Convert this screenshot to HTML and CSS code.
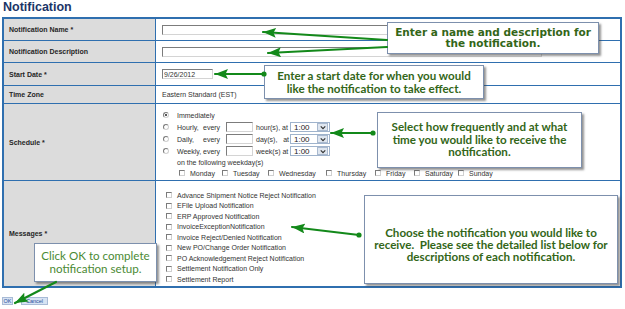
FILE: index.html
```html
<!DOCTYPE html>
<html>
<head>
<meta charset="utf-8">
<title>Notification</title>
<link rel="stylesheet" href="styles.css">
</head>
<body>
<div class="page">
  <h1 class="title">Notification</h1>
  <div class="form">
    <div class="lbl">Notification Name *</div>
    <div class="val"><input class="field wide" type="text"></div>

    <div class="lbl">Notification Description</div>
    <div class="val"><input class="field wide" type="text"></div>

    <div class="lbl">Start Date *</div>
    <div class="val"><input class="field date" type="text" value="9/26/2012"></div>

    <div class="lbl">Time Zone</div>
    <div class="val">Eastern Standard (EST)</div>

    <div class="lbl">Schedule *</div>
    <div class="val sched">
      <div class="srow"><span class="radio on"></span><span>Immediately</span></div>
      <div class="srow"><span class="radio"></span><span class="freq">Hourly,</span><span class="every">every</span><span class="field num"></span><span class="unit">hour(s), at</span><span class="select"><span class="sel-val">1:00</span><span class="sel-btn"><svg viewBox="0 0 8 6" width="6" height="5"><polyline points="1,1.5 4,4.5 7,1.5" fill="none" stroke="#333" stroke-width="1.6"/></svg></span></span></div>
      <div class="srow"><span class="radio"></span><span class="freq">Daily,</span><span class="every">every</span><span class="field num"></span><span class="unit">day(s),&nbsp;&nbsp;&nbsp;at</span><span class="select"><span class="sel-val">1:00</span><span class="sel-btn"><svg viewBox="0 0 8 6" width="6" height="5"><polyline points="1,1.5 4,4.5 7,1.5" fill="none" stroke="#333" stroke-width="1.6"/></svg></span></span></div>
      <div class="srow"><span class="radio"></span><span class="freq">Weekly,</span><span class="every">every</span><span class="field num"></span><span class="unit">week(s) at</span><span class="select"><span class="sel-val">1:00</span><span class="sel-btn"><svg viewBox="0 0 8 6" width="6" height="5"><polyline points="1,1.5 4,4.5 7,1.5" fill="none" stroke="#333" stroke-width="1.6"/></svg></span></span></div>
      <div class="srow follow">on the following weekday(s)</div>
      <div class="days">
        <span class="day"><span class="check"></span>Monday</span>
        <span class="day"><span class="check"></span>Tuesday</span>
        <span class="day"><span class="check"></span>Wednesday</span>
        <span class="day"><span class="check"></span>Thursday</span>
        <span class="day"><span class="check"></span>Friday</span>
        <span class="day"><span class="check"></span>Saturday</span>
        <span class="day"><span class="check"></span>Sunday</span>
      </div>
    </div>

    <div class="lbl last">Messages *</div>
    <div class="val msgs last">
      <div class="msg"><span class="check"></span>Advance Shipment Notice Reject Notification</div>
      <div class="msg"><span class="check"></span>EFile Upload Notification</div>
      <div class="msg"><span class="check"></span>ERP Approved Notification</div>
      <div class="msg"><span class="check"></span>InvoiceExceptionNotification</div>
      <div class="msg"><span class="check"></span>Invoice Reject/Denied Notification</div>
      <div class="msg"><span class="check"></span>New PO/Change Order Notification</div>
      <div class="msg"><span class="check"></span>PO Acknowledgement Reject Notification</div>
      <div class="msg"><span class="check"></span>Settlement Notification Only</div>
      <div class="msg"><span class="check"></span>Settlement Report</div>
    </div>
  </div>
  <div class="buttons">
    <button class="btn ok" type="button">OK</button>
    <button class="btn cancel" type="button">Cancel</button>
  </div>

  <div class="callout c1">Enter a name and description for<br>the notification.</div>
  <div class="callout c2">Enter a start date for when you would<br>like the notification to take effect.</div>
  <div class="callout c3">Select how frequently and at what<br>time you would like to receive the<br>notification.</div>
  <div class="callout c4">Choose the notification you would like to<br>receive.&nbsp; Please see the detailed list below for<br>descriptions of each notification.</div>
  <div class="callout c5">Click OK to complete<br>notification setup.</div>

  <svg class="arrows" width="625" height="309" viewBox="0 0 625 309">
    <defs>
      <marker id="head" markerUnits="userSpaceOnUse" markerWidth="14" markerHeight="10" refX="13" refY="5" orient="auto">
        <path d="M0,0 L13,5 L0,10 L2.5,5 Z" fill="#13891a"/>
      </marker>
    </defs>
    <g stroke="#13891a" stroke-width="2.2" fill="none" stroke-linecap="round">
      <line x1="387" y1="40" x2="263" y2="32" marker-end="url(#head)"/>
      <line x1="387" y1="47" x2="268" y2="53" marker-end="url(#head)"/>
      <line x1="264" y1="74" x2="215" y2="74" marker-end="url(#head)"/>
      <line x1="373" y1="133" x2="331" y2="133" marker-end="url(#head)"/>
      <line x1="359" y1="235" x2="292" y2="227" marker-end="url(#head)"/>
      <line x1="56" y1="282" x2="15" y2="303" marker-end="url(#head)"/>
    </g>
    <g fill="#13891a">
      <circle cx="264" cy="74" r="2.6"/>
      <circle cx="373" cy="133" r="2.6"/>
      <circle cx="359" cy="235" r="2.6"/>
    </g>
  </svg>
</div>
</body>
</html>
```

FILE: styles.css
```css
* { box-sizing: border-box; }

body {
  margin: 0;
  background: #ffffff;
  font-family: "Liberation Sans", Arial, sans-serif;
}

.page {
  position: relative;
  width: 625px;
  height: 309px;
  overflow: hidden;
}

.title {
  margin: 0;
  height: 17px;
  padding-left: 3px;
  font: bold 12.5px/15px "Liberation Sans", Arial, sans-serif;
  color: #1b3567;
}

.form {
  margin-left: 2px;
  width: 620px;
  border: 2px solid #2f6faf;
  display: grid;
  grid-template-columns: 152px 1fr;
  grid-template-rows: 22px 22px 23px 18px 77px 105px;
}

.lbl {
  background: #dcdcdc;
  border-right: 1px solid #2f6faf;
  border-bottom: 1px solid #2f6faf;
  display: flex;
  align-items: center;
  padding-left: 5px;
  font-weight: bold;
  font-size: 7px;
  color: #262626;
}

.val {
  border-bottom: 1px solid #2f6faf;
  display: flex;
  align-items: center;
  padding-left: 6px;
  font-size: 7px;
  color: #333333;
}

.last { border-bottom: none; }

.field {
  display: inline-block;
  height: 10px;
  margin: 0;
  padding: 0 1px;
  background: #ffffff;
  border: 1px solid;
  border-color: #7c7c7c #d4d4d4 #d4d4d4 #7c7c7c;
  font: 7px/8px "Liberation Sans", Arial, sans-serif;
  color: #333333;
  outline: none;
}

.wide { width: 380px; }
.date { width: 51px; }
.num { width: 27px; }

/* schedule */
.sched {
  display: block;
  padding: 5px 0 0 7px;
}

.srow {
  display: flex;
  align-items: center;
  height: 12px;
}

.radio {
  width: 6px;
  height: 6px;
  margin-right: 8px;
  border-radius: 50%;
  border: 1px solid;
  border-color: #7b7b7b #d0d0d0 #d0d0d0 #7b7b7b;
  background: #ffffff;
  position: relative;
}

.radio.on::after {
  content: "";
  position: absolute;
  left: 1px;
  top: 1px;
  width: 2px;
  height: 2px;
  border-radius: 50%;
  background: #222222;
}

.freq { width: 26px; }
.every { width: 23px; }
.unit { width: 34px; margin-left: 3px; white-space: nowrap; }

.select {
  display: flex;
  align-items: center;
  justify-content: space-between;
  width: 40px;
  height: 10px;
  border: 1px solid #9fb3cc;
  background: #ffffff;
  padding: 0 1px 0 3px;
}

.sel-val {
  font-size: 8px;
  color: #222222;
}

.sel-btn {
  display: flex;
  align-items: center;
  justify-content: center;
  width: 11px;
  height: 8px;
  background: #dfe6ef;
  border: 1px solid #a9b9cf;
}

.follow {
  height: 11px;
  padding-left: 14px;
}

.days {
  display: grid;
  grid-template-columns: 43px 46px 58px 49px 39px 44px auto;
  align-items: center;
  height: 10px;
  padding-left: 16px;
}

.day {
  display: flex;
  align-items: center;
  white-space: nowrap;
}

.check {
  display: inline-block;
  width: 6px;
  height: 6px;
  margin-right: 5px;
  border: 1px solid;
  border-color: #7b7b7b #d0d0d0 #d0d0d0 #7b7b7b;
  background: #ffffff;
  flex: none;
}

/* messages */
.msgs {
  display: block;
  padding: 9px 0 0 10px;
}

.msg {
  display: flex;
  align-items: center;
  height: 10.5px;
  white-space: nowrap;
}

/* buttons */
.buttons {
  display: flex;
  gap: 8px;
  margin: 9px 0 0 2px;
}

.btn {
  height: 8px;
  margin: 0;
  padding: 0;
  border: 1px solid #a8bbd6;
  background: #d7e3f3;
  color: #1f4e99;
  font: 5.5px/6px "Liberation Sans", Arial, sans-serif;
}

.ok { width: 11px; }
.cancel { width: 27px; }

/* overlays */
.arrows {
  position: absolute;
  left: 0;
  top: 0;
  pointer-events: none;
}

.callout {
  position: absolute;
  display: flex;
  align-items: center;
  justify-content: center;
  text-align: center;
  background: #ffffff;
  border: 1px solid #7d90ad;
  box-shadow: 2px 2px 2px rgba(60, 60, 60, 0.55);
  color: #336618;
  font-family: Lato, "Liberation Sans", sans-serif;
  font-weight: bold;
  font-size: 11.6px;
  white-space: nowrap;
}

.c1 {
  left: 387px;
  top: 22px;
  width: 212px;
  height: 32px;
  font-family: "DejaVu Sans", sans-serif;
  font-size: 10.5px;
  line-height: 11px;
}

.c2 {
  left: 264px;
  top: 65px;
  width: 220px;
  height: 34px;
  line-height: 13px;
}

.c3 {
  left: 377px;
  top: 112px;
  width: 205px;
  height: 56px;
  line-height: 12.5px;
}

.c4 {
  left: 364px;
  top: 195px;
  width: 254px;
  height: 89px;
  padding-top: 10px;
  line-height: 12px;
}

.c5 {
  left: 34px;
  top: 243px;
  width: 123px;
  height: 39px;
  line-height: 12.5px;
  font-weight: normal;
  font-size: 11.6px;
  color: #4a8a33;
}
```
